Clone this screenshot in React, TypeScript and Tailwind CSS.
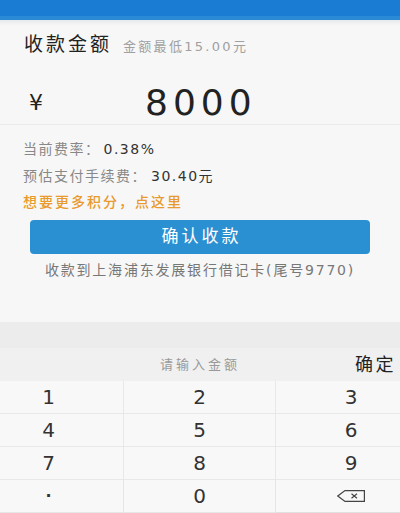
import React from "react";

const font = { fontFamily: '"DejaVu Sans", "Noto Sans CJK SC", sans-serif' };

function Backspace() {
  return (
    <svg width="28" height="12" viewBox="0 0 28 12" fill="none" stroke="#444" strokeWidth="1.2">
      <path d="M8 0.6 H27.4 V11.4 H8 L0.8 6 Z" />
      <path d="M14.5 3.8 L20 8.2 M20 3.8 L14.5 8.2" />
    </svg>
  );
}

export default function App() {
  const keys = ["1", "2", "3", "4", "5", "6", "7", "8", "9", "·", "0", "del"];
  return (
    <div className="w-[400px] h-[513px] overflow-hidden bg-[#f7f7f7] flex flex-col" style={font}>
      <div className="h-[16px] bg-[#1a7dd3] shrink-0" />
      <div className="h-[4px] bg-[#2b8ad6] shrink-0" />
      <div className="h-[6px] bg-gradient-to-b from-[#e6eaee] to-[#f7f7f7] shrink-0" />
      <div className="flex items-baseline pl-[24px] pt-[4px] h-[38px]">
        <span className="text-[19px] text-[#222] tracking-[3px]">收款金额</span>
        <span className="ml-[11px] text-[13px] text-[#a0a0a0] tracking-[2.3px]">金额最低15.00元</span>
      </div>
      <div className="flex items-center h-[58px] border-b border-[#ebebeb] mt-[3px] pt-[14px]">
        <span className="ml-[29px] text-[22px] text-[#222] w-[116px]">¥</span>
        <span className="text-[36px] text-[#222] leading-none tracking-[5px]">8000</span>
      </div>
      <div className="pl-[23px] mt-[11px] text-[14px] text-[#888] tracking-[1.5px] h-[26px] flex items-center">
        当前费率：<span className="ml-[3px] text-[#333]">0.38%</span>
      </div>
      <div className="pl-[23px] mt-[1px] text-[14px] text-[#888] tracking-[1.5px] h-[26px] flex items-center">
        预估支付手续费：<span className="ml-[4px] text-[#333]">30.40元</span>
      </div>
      <div className="pl-[23px] text-[14px] text-[#e89a2c] tracking-[2px] font-medium h-[26px] flex items-center">想要更多积分，点这里</div>
      <div className="mx-[30px] mt-[5px] h-[34px] rounded-[4px] bg-[#2a90d2] flex items-center justify-center text-white text-[17px] tracking-[3px]">
        <span className="ml-[3px]">确认收款</span>
      </div>
      <div className="mt-[6px] text-center text-[14px] text-[#777] tracking-[1.8px] h-[20px] leading-[20px]">
        收款到上海浦东发展银行借记卡(尾号9770)
      </div>
      <div className="flex-1" />
      <div className="h-[26px] bg-[#ececec] shrink-0" />
      <div className="h-[33px] bg-[#f0f0f0] flex items-center relative shrink-0">
        <span className="absolute left-0 right-0 text-center text-[13px] text-[#999] tracking-[3px]">请输入金额</span>
        <span className="ml-auto mr-[4px] text-[18px] text-[#222] tracking-[2.5px] relative">确定</span>
      </div>
      <div className="grid grid-cols-[124px_152px_124px] shrink-0 bg-[#f8f8f8]">
        {keys.map((k, i) => {
          const col = i % 3;
          const row = Math.floor(i / 3);
          const cls = [
            "h-[33px] flex items-center justify-center text-[20px] text-[#333]",
            col === 0 ? "pr-[26px]" : col === 2 ? "pl-[26px]" : "",
            col < 2 ? "border-r border-[#e6e6e6]" : "",
            row < 3 ? "border-b border-[#e8e8e8]" : "border-b border-[#e0e0e0]",
          ].join(" ");
          return (
            <div key={i} className={cls}>
              {k === "del" ? <Backspace /> : k === "·" ? <span className="text-[16px] font-bold">·</span> : k}
            </div>
          );
        })}
      </div>
    </div>
  );
}
